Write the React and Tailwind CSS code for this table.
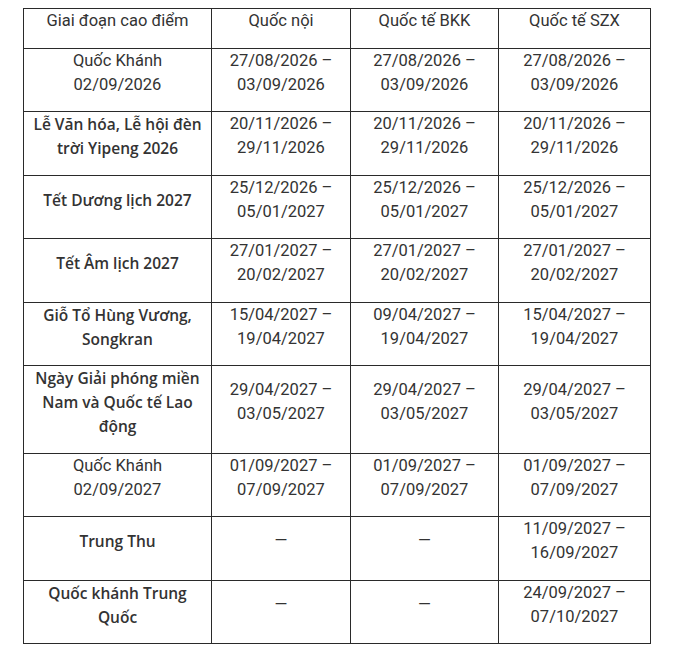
import React from 'react';

const SQ = "font-['Roboto','Liberation_Sans',sans-serif]";
const OS = "font-['Open_Sans','Noto_Sans',sans-serif]";

// left cell: [lines, fontClass]
const rows = [
  { name: ['Quốc Khánh', '02/09/2026'], sq: true, d: [['27/08/2026 –', '03/09/2026'], ['27/08/2026 –', '03/09/2026'], ['27/08/2026 –', '03/09/2026']] },
  { name: ['Lễ Văn hóa, Lễ hội đèn', 'trời Yipeng 2026'], d: [['20/11/2026 –', '29/11/2026'], ['20/11/2026 –', '29/11/2026'], ['20/11/2026 –', '29/11/2026']] },
  { name: ['Tết Dương lịch 2027'], d: [['25/12/2026 –', '05/01/2027'], ['25/12/2026 –', '05/01/2027'], ['25/12/2026 –', '05/01/2027']] },
  { name: ['Tết Âm lịch 2027'], d: [['27/01/2027 –', '20/02/2027'], ['27/01/2027 –', '20/02/2027'], ['27/01/2027 –', '20/02/2027']] },
  { name: ['Giỗ Tổ Hùng Vương,', 'Songkran'], d: [['15/04/2027 –', '19/04/2027'], ['09/04/2027 –', '19/04/2027'], ['15/04/2027 –', '19/04/2027']] },
  { name: ['Ngày Giải phóng miền', 'Nam và Quốc tế Lao', 'động'], d: [['29/04/2027 –', '03/05/2027'], ['29/04/2027 –', '03/05/2027'], ['29/04/2027 –', '03/05/2027']] },
  { name: ['Quốc Khánh', '02/09/2027'], sq: true, d: [['01/09/2027 –', '07/09/2027'], ['01/09/2027 –', '07/09/2027'], ['01/09/2027 –', '07/09/2027']] },
  { name: ['Trung Thu'], d: [['—'], ['—'], ['11/09/2027 –', '16/09/2027']] },
  { name: ['Quốc khánh Trung', 'Quốc'], d: [['—'], ['—'], ['24/09/2027 –', '07/10/2027']] },
];

function Lines({ lines }) {
  return (
    <p className="mb-[14.5px] leading-6">
      {lines.map((l, i) => (
        <span key={i} className="block whitespace-nowrap">{l}</span>
      ))}
    </p>
  );
}

const td = 'border border-[#2a2a2a] p-0 text-center align-middle';

export default function App() {
  return (
    <div className="min-h-[650px] bg-white pl-[23px] pt-[8px] text-[#333]">
      <table className="w-[627px] table-fixed border-collapse">
        <colgroup>
          <col className="w-[188px]" />
          <col className="w-[139px]" />
          <col className="w-[148px]" />
          <col className="w-[152px]" />
        </colgroup>
        <thead>
          <tr className={`${SQ} text-[16.5px]`}>
            {['Giai đoạn cao điểm', 'Quốc nội', 'Quốc tế BKK', 'Quốc tế SZX'].map((h) => (
              <th key={h} className={td + ' font-normal'}>
                <Lines lines={[h]} />
              </th>
            ))}
          </tr>
        </thead>
        <tbody>
          {rows.map((r, i) => (
            <tr key={i}>
              <td className={`${td} ${r.sq ? SQ + ' text-[16.5px] font-normal' : OS + ' text-[15.5px] font-semibold'}`}>
                <Lines lines={r.name} />
              </td>
              {r.d.map((c, j) => (
                <td key={j} className={`${td} ${SQ} text-[16.5px]`}>
                  <Lines lines={c} />
                </td>
              ))}
            </tr>
          ))}
        </tbody>
      </table>
    </div>
  );
}
